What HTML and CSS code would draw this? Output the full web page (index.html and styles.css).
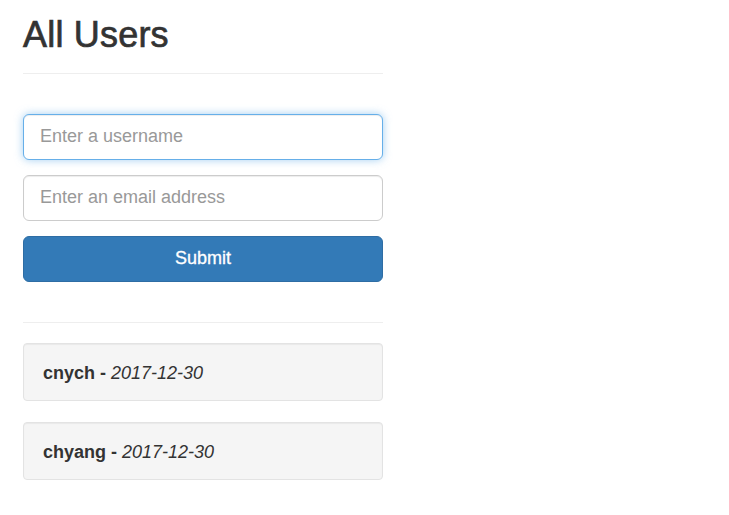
FILE: index.html
```html
<!DOCTYPE html>
<html>
<head>
<meta charset="utf-8">
<link rel="stylesheet" href="styles.css">
</head>
<body>
<div class="container">
  <h1 class="title">All Users</h1>
  <hr class="rule">
  <form class="user-form">
    <div class="form-group">
      <input class="field field-focus" type="text" placeholder="Enter a username">
    </div>
    <div class="form-group">
      <input class="field" type="text" placeholder="Enter an email address">
    </div>
    <button class="btn-submit" type="button">Submit</button>
  </form>
  <hr class="rule rule-list">
  <div class="well"><strong>cnych</strong> - <em>2017-12-30</em></div>
  <div class="well"><strong>chyang</strong> - <em>2017-12-30</em></div>
</div>
</body>
</html>
```
FILE: styles.css
```css
* { box-sizing: border-box; }
html, body {
  margin: 0;
  background: #fff;
  font-family: "Liberation Sans", Arial, Helvetica, sans-serif;
  color: #333;
}
.container {
  width: 360px;
  margin-left: 23px;
  padding-top: 15px;
}
.title {
  margin: 0;
  font-size: 36px;
  font-weight: 400;
  line-height: 39.6px;
  color: #333;
  -webkit-text-stroke: 0.7px #333;
  letter-spacing: 0.2px;
}
.rule {
  margin: 18px 0 0 0;
  border: 0;
  border-top: 1px solid #eee;
  height: 0;
}
.user-form {
  margin-top: 40px;
}
.form-group {
  margin-bottom: 15px;
}
.field {
  display: block;
  width: 100%;
  height: 46px;
  padding: 10px 16px;
  font-family: "Liberation Sans", Arial, Helvetica, sans-serif;
  font-size: 18px;
  line-height: 1.33;
  color: #555;
  background: #fff;
  border: 1px solid #ccc;
  border-radius: 6px;
  box-shadow: inset 0 1px 1px rgba(0,0,0,.075);
  outline: none;
}
.field::placeholder { color: #999; }
.field-focus {
  border-color: #66afe9;
  box-shadow: inset 0 1px 1px rgba(0,0,0,.075), 0 0 8px rgba(102,175,233,.6);
}
.btn-submit {
  display: block;
  width: 100%;
  height: 46px;
  padding: 10px 16px;
  font-family: "Liberation Sans", Arial, Helvetica, sans-serif;
  font-size: 18px;
  line-height: 1.33;
  color: #fff;
  background: #337ab7;
  border: 1px solid #2e6da4;
  border-radius: 6px;
  -webkit-text-stroke: 0.3px #fff;
}
.rule-list {
  margin-top: 40px;
}
.well {
  margin-top: 20px;
  padding: 20px 19px 19px;
  height: 58px;
  background: #f5f5f5;
  border: 1px solid #e3e3e3;
  border-radius: 4px;
  box-shadow: inset 0 1px 1px rgba(0,0,0,.05);
  font-size: 18px;
  line-height: 18px;
  font-weight: 700;
}
.well + .well { margin-top: 21px; }
.well em { font-weight: 400; }
```
